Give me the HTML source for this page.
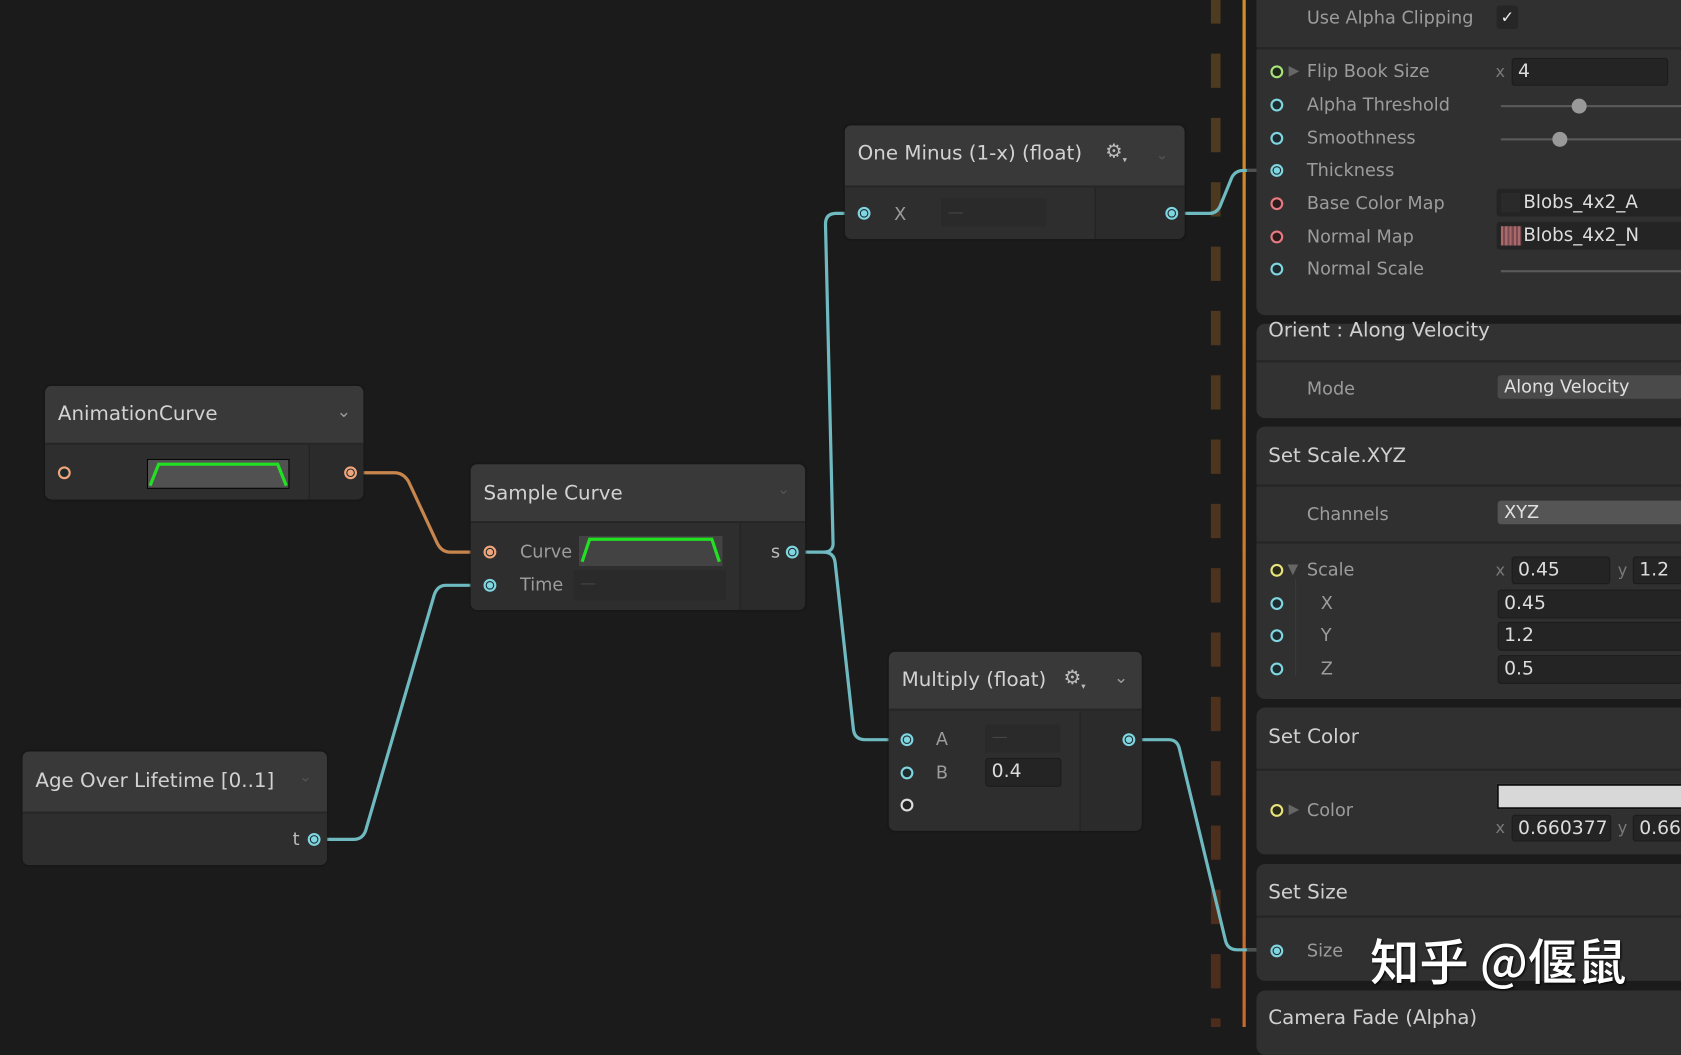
<!DOCTYPE html>
<html><head><meta charset="utf-8"><style>
html,body{margin:0;padding:0;background:#1b1b1b;overflow:hidden;width:1681px;height:1027px}
#w{position:absolute;left:0;top:0;width:1568px;height:958px;transform:scale(1.07207,1.07203);transform-origin:0 0;font-family:"DejaVu Sans","Liberation Sans",sans-serif;color:#c8c8c8}
.a{position:absolute}
.node{position:absolute;background:#2e2e2e;border-radius:6px;overflow:hidden;box-shadow:0 0 2px #111}
.hd{position:absolute;left:0;top:0;right:0;background:#393939;border-bottom:2px solid #262626;font-size:18.5px;color:#d2d2d2}
.sep{position:absolute;top:0;bottom:0;width:1px;background:#222}
.port{position:absolute;width:8px;height:8px;border:2px solid #7fd6e0;border-radius:50%;background:#1d2b2e;margin:-6px 0 0 -6px}
.port.f::after{content:"";position:absolute;left:1px;top:1px;width:6px;height:6px;border-radius:50%;background:#7fd6e0}
.o{border-color:#f0a57a}.o.f::after{background:#f0a57a}
.r{border-color:#e87a80;background:#2a1c1d}
.g{border-color:#a8e27a;background:#20281a}
.y{border-color:#e8e27a;background:#2a2a1a}
.wt{border-color:#ddd;background:#222}
.lbl{position:absolute;font-size:16.5px;color:#9c9c9c;line-height:20px}
.card{position:absolute;left:1172px;width:420px;background:#303030;border-radius:8px}
.line{position:absolute;left:1172px;width:420px;height:2px;background:#252525}
.ct{position:absolute;font-size:18.5px;color:#d0d0d0}
.fld{position:absolute;background:#242424;border:1px solid #1c1c1c;border-radius:3px;font-size:17.5px;color:#dcdcdc;line-height:24px;padding-left:5px;box-sizing:border-box}
.dd{position:absolute;background:#4a4a4a;border-radius:3px;font-size:16.5px;color:#e0e0e0;line-height:22px;padding-left:6px;box-sizing:border-box}
.sl{position:absolute;height:2px;background:#5a5a5a}
.kn{position:absolute;width:14px;height:14px;border-radius:50%;background:#999;margin:-7px 0 0 -7px}
.sm{position:absolute;font-size:15px;color:#7a7a7a}
.chev{position:absolute;font-size:14px;color:#9a9a9a}
.chev.d{color:#555}
</style></head><body><div id="w">

<svg class="a" style="left:0;top:0" width="1568" height="958">
<defs><linearGradient id="dg" gradientUnits="userSpaceOnUse" x1="0" y1="0" x2="0" y2="958"><stop offset="0" stop-color="#4d3c20"/><stop offset="1" stop-color="#4d2c1c"/></linearGradient>
<linearGradient id="og" gradientUnits="userSpaceOnUse" x1="0" y1="0" x2="0" y2="958"><stop offset="0" stop-color="#d28e28"/><stop offset="1" stop-color="#c9682c"/></linearGradient></defs>
<line x1="1134" y1="-10" x2="1134" y2="958" stroke="url(#dg)" stroke-width="9" stroke-dasharray="32 28"/>
<rect x="1159" y="0" width="3" height="958" fill="url(#og)"/>
<g fill="none" stroke-width="3" stroke-linejoin="round">
<path d="M333 441 H368 Q376 441 381 449 L408 507 Q412 515 420 515 H452" stroke="#c7864d"/>
<path d="M299 783 H330 Q338 783 341 775 L405 555 Q408 546 416 546 H452" stroke="#6fb9c0"/>
<path d="M745 515 H768 Q778 515 777 505 L770 209 Q770 199 780 199 H801" stroke="#6fb9c0"/>
<path d="M768 515 Q778 515 779 525 L796 680 Q797 690 807 690 H841" stroke="#6fb9c0"/>
<path d="M1099 199 H1128 Q1136 199 1139 190 L1148 168 Q1151 159 1160 159 H1186" stroke="#6fb9c0"/>
<path d="M1059 690 H1090 Q1098 690 1100 698 L1143 877 Q1145 886 1154 886 H1186" stroke="#6fb9c0"/>
</g>
<g stroke="#505050" stroke-width="3"><line x1="1163" y1="159" x2="1186" y2="159"/><line x1="1163" y1="886" x2="1186" y2="886"/></g>
</svg>

<div class="node" style="left:788px;top:117px;width:317px;height:106px">
<div class="hd" style="height:56px"><span class="a" style="left:12px;top:16px">One Minus (1-x) (float)</span><span class="a" style="left:243px;top:14px;color:#bbb;font-size:18px">⚙<sub style="font-size:8px">▾</sub></span><span class="chev d" style="left:290px;top:20px">⌄</span></div>
<div class="a" style="left:233px;top:58px;width:84px;height:48px;background:#2b2b2b;border-left:1px solid #222"></div>
<div class="a" style="left:90px;top:68px;width:98px;height:26px;background:#2a2a2a"></div>
<span class="lbl" style="left:46px;top:73px">X</span><span class="sm" style="left:96px;top:72px;color:#444">—</span>
</div>
<div class="port f" style="left:806px;top:199px"></div>
<div class="port f" style="left:1093px;top:199px"></div>

<div class="node" style="left:42px;top:360px;width:297px;height:106px">
<div class="hd" style="height:53px"><span class="a" style="left:12px;top:16px">AnimationCurve</span><span class="chev" style="left:272px;top:14px;font-size:16px">⌄</span></div>
<div class="a" style="left:246px;top:55px;width:51px;height:51px;background:#2b2b2b;border-left:1px solid #222"></div>
<svg class="a" style="left:95px;top:68px" width="133" height="28"><rect x="0.5" y="0.5" width="132" height="27" fill="#515151" stroke="#000"/><path d="M3 25 L11 5 H122 L130 25" fill="none" stroke="#22e022" stroke-width="3"/></svg>
</div>
<div class="port o" style="left:60px;top:441px"></div>
<div class="port o f" style="left:327px;top:441px"></div>

<div class="node" style="left:439px;top:433px;width:312px;height:136px">
<div class="hd" style="height:53px"><span class="a" style="left:12px;top:17px">Sample Curve</span><span class="chev d" style="left:286px;top:16px">⌄</span></div>
<div class="a" style="left:251px;top:55px;width:61px;height:81px;background:#2b2b2b;border-left:1px solid #222"></div>
<span class="lbl" style="left:46px;top:72px">Curve</span><span class="lbl" style="left:46px;top:103px">Time</span>
<svg class="a" style="left:101px;top:67px" width="134" height="28"><rect x="0" y="0" width="134" height="28" fill="#434343"/><path d="M3 24 L10 3 H124 L131 24" fill="none" stroke="#22e022" stroke-width="3"/></svg>
<div class="a" style="left:96px;top:99px;width:142px;height:28px;background:#2a2a2a"></div><span class="sm" style="left:102px;top:102px;color:#444">—</span>
<span class="lbl" style="left:280px;top:72px;color:#bbb">s</span>
</div>
<div class="port o f" style="left:457px;top:515px"></div>
<div class="port f" style="left:457px;top:546px"></div>
<div class="port f" style="left:739px;top:515px"></div>

<div class="node" style="left:21px;top:701px;width:284px;height:106px">
<div class="hd" style="height:56px"><span class="a" style="left:12px;top:17px">Age Over Lifetime [0..1]</span><span class="chev d" style="left:258px;top:16px">⌄</span></div>
<span class="lbl" style="left:252px;top:72px;color:#bbb">t</span>
</div>
<div class="port f" style="left:293px;top:783px"></div>

<div class="node" style="left:829px;top:608px;width:236px;height:167px">
<div class="hd" style="height:53px"><span class="a" style="left:12px;top:16px">Multiply (float)</span><span class="a" style="left:163px;top:14px;color:#bbb">⚙<sub style="font-size:8px">▾</sub></span><span class="chev" style="left:210px;top:14px;font-size:16px">⌄</span></div>
<div class="a" style="left:178px;top:55px;width:58px;height:112px;background:#2b2b2b;border-left:1px solid #222"></div>
<span class="lbl" style="left:44px;top:72px">A</span><span class="lbl" style="left:44px;top:103px">B</span>
<div class="a" style="left:90px;top:68px;width:70px;height:26px;background:#2a2a2a"></div><span class="sm" style="left:96px;top:70px;color:#444">—</span>
<div class="fld" style="left:90px;top:99px;width:71px;height:27px">0.4</div>
</div>
<div class="port f" style="left:846px;top:690px"></div>
<div class="port" style="left:846px;top:721px;background:#1d2b2e"></div>
<div class="port wt" style="left:846px;top:751px"></div>
<div class="port f" style="left:1053px;top:690px"></div>

<div class="card" style="top:-10px;height:304px"></div>
<div class="line" style="top:44px"></div>
<span class="lbl" style="left:1219px;top:7px">Use Alpha Clipping</span>
<div class="a" style="left:1396px;top:5px;width:20px;height:22px;background:#262626;border-radius:3px;color:#eee;font-size:15px;text-align:center;line-height:22px">✓</div>

<div class="port g" style="left:1191px;top:67px"></div><span class="a" style="left:1202px;top:59px;color:#666;font-size:13px">▶</span>
<span class="lbl" style="left:1219px;top:57px">Flip Book Size</span><span class="sm" style="left:1395px;top:58px">x</span>
<div class="fld" style="left:1410px;top:54px;width:146px;height:26px">4</div>
<div class="port" style="left:1191px;top:98px;background:#1d2b2e"></div><span class="lbl" style="left:1219px;top:88px">Alpha Threshold</span>
<div class="sl" style="left:1400px;top:98px;width:168px"></div><div class="kn" style="left:1473px;top:99px"></div>
<div class="port" style="left:1191px;top:129px;background:#1d2b2e"></div><span class="lbl" style="left:1219px;top:119px">Smoothness</span>
<div class="sl" style="left:1400px;top:129px;width:168px"></div><div class="kn" style="left:1455px;top:130px"></div>
<div class="port f" style="left:1191px;top:159px"></div><span class="lbl" style="left:1219px;top:149px">Thickness</span>
<div class="port r" style="left:1191px;top:190px"></div><span class="lbl" style="left:1219px;top:180px">Base Color Map</span>
<div class="a" style="left:1396px;top:176px;width:180px;height:26px;background:#242424;border-radius:3px"></div><div class="a" style="left:1400px;top:180px;width:18px;height:18px;background:#2a2a2a"></div><span class="a" style="left:1421px;top:179px;font-size:17px;color:#ddd">Blobs_4x2_A</span>
<div class="port r" style="left:1191px;top:221px"></div><span class="lbl" style="left:1219px;top:211px">Normal Map</span>
<div class="a" style="left:1396px;top:207px;width:180px;height:26px;background:#242424;border-radius:3px"></div><div class="a" style="left:1400px;top:211px;width:19px;height:18px;background:repeating-linear-gradient(90deg,#a86a6a 0 2px,#7a4a50 2px 4px)"></div><span class="a" style="left:1421px;top:210px;font-size:17px;color:#ddd">Blobs_4x2_N</span>
<div class="port" style="left:1191px;top:251px;background:#1d2b2e"></div><span class="lbl" style="left:1219px;top:241px">Normal Scale</span>
<div class="sl" style="left:1400px;top:252px;width:168px"></div>

<div class="card" style="top:302px;height:88px;background:#323232"></div><div class="line" style="top:336px"></div>
<span class="ct" style="left:1183px;top:298px">Orient : Along Velocity</span>
<span class="lbl" style="left:1219px;top:353px">Mode</span><div class="dd" style="left:1397px;top:350px;width:180px;height:22px">Along Velocity</div>

<div class="card" style="top:398px;height:254px"></div><div class="line" style="top:452px"></div><div class="line" style="top:505px"></div>
<span class="ct" style="left:1183px;top:415px">Set Scale.XYZ</span>
<span class="lbl" style="left:1219px;top:470px">Channels</span><div class="dd" style="left:1397px;top:467px;width:180px;height:22px;background:#555">XYZ</div>
<div class="port y" style="left:1191px;top:532px"></div><span class="a" style="left:1201px;top:524px;color:#666;font-size:13px">▼</span><span class="lbl" style="left:1219px;top:522px">Scale</span>
<div class="a" style="left:1208px;top:540px;width:1px;height:90px;background:#3c3c3c"></div>
<span class="sm" style="left:1395px;top:523px">x</span><div class="fld" style="left:1410px;top:519px;width:92px;height:26px">0.45</div>
<span class="sm" style="left:1509px;top:523px">y</span><div class="fld" style="left:1523px;top:519px;width:60px;height:26px">1.2</div>
<div class="port" style="left:1191px;top:563px;background:#1d2b2e"></div><span class="lbl" style="left:1232px;top:553px">X</span><div class="fld" style="left:1397px;top:550px;width:190px;height:27px">0.45</div>
<div class="port" style="left:1191px;top:593px;background:#1d2b2e"></div><span class="lbl" style="left:1232px;top:583px">Y</span><div class="fld" style="left:1397px;top:580px;width:190px;height:27px">1.2</div>
<div class="port" style="left:1191px;top:624px;background:#1d2b2e"></div><span class="lbl" style="left:1232px;top:614px">Z</span><div class="fld" style="left:1397px;top:611px;width:190px;height:27px">0.5</div>

<div class="card" style="top:660px;height:137px"></div><div class="line" style="top:717px"></div>
<span class="ct" style="left:1183px;top:677px">Set Color</span>
<div class="port y" style="left:1191px;top:756px"></div><span class="a" style="left:1202px;top:748px;color:#666;font-size:13px">▶</span><span class="lbl" style="left:1219px;top:746px">Color</span>
<div class="a" style="left:1396px;top:731px;width:180px;height:20px;background:#d8d8d8;border:2px solid #111"></div>
<span class="sm" style="left:1395px;top:763px">x</span><div class="fld" style="left:1410px;top:760px;width:93px;height:25px">0.660377</div>
<span class="sm" style="left:1509px;top:763px">y</span><div class="fld" style="left:1523px;top:760px;width:60px;height:25px">0.66</div>

<div class="card" style="top:806px;height:109px"></div><div class="line" style="top:854px"></div>
<span class="ct" style="left:1183px;top:822px">Set Size</span>
<div class="port f" style="left:1191px;top:887px"></div><span class="lbl" style="left:1219px;top:877px">Size</span>

<div class="card" style="top:924px;height:60px"></div>
<span class="ct" style="left:1183px;top:939px">Camera Fade (Alpha)</span>

<span class="a" style="left:1278px;top:862px;font-family:'Noto Sans CJK SC',sans-serif;font-size:46px;font-weight:500;color:#fff;text-shadow:1px 1px 2px #000;white-space:nowrap">知乎 @偃鼠</span>
</div></body></html>
